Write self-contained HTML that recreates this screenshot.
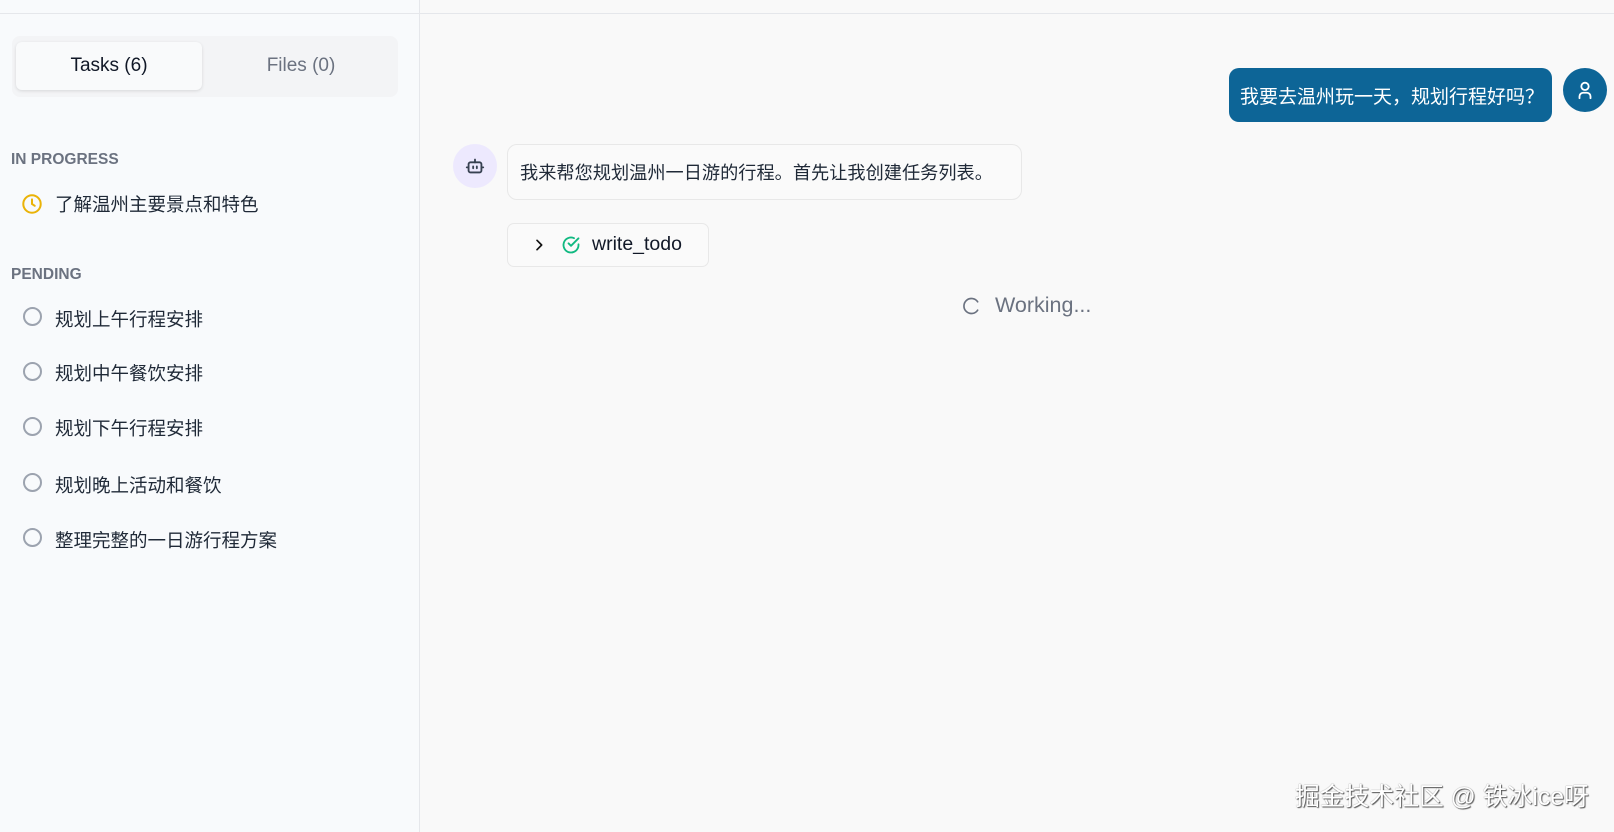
<!DOCTYPE html>
<html><head><meta charset="utf-8"><style>
*{margin:0;padding:0;box-sizing:border-box}
body{width:1614px;height:832px;overflow:hidden;background:#f9f9f9;font-family:"Liberation Sans","Noto Sans CJK SC",sans-serif;position:relative;color:#1f2937}
.abs{position:absolute}
#side{left:0;top:0;width:420px;height:832px;background:#f8fafc;border-right:1px solid #e5e7eb}
#topline{left:0;top:13px;width:1614px;height:1px;background:#e5e7eb}
.tabs{left:12px;top:36px;width:386px;height:61px;background:#f3f4f6;border-radius:8px}
.tab{top:6px;height:48px;display:flex;align-items:center;justify-content:center;font-size:19px}
.h{font-size:15.5px;font-weight:bold;color:#6b7280;left:11px}
.item{left:55px;font-size:18.5px;color:#1f2937;line-height:22px}
.circ{left:23px;width:19px;height:19px;border:2px solid #9ca3af;border-radius:50%}
</style></head><body>
<div class="abs" id="side"></div>
<div class="abs" id="topline"></div>
<div class="abs tabs">
 <div class="abs tab" style="left:4px;width:186px;background:#f9fafb;border-radius:6px;box-shadow:0 1px 3px rgba(0,0,0,.12);color:#111827">Tasks (6)</div>
 <div class="abs tab" style="left:196px;width:186px;color:#6b7280">Files (0)</div>
</div>
<div class="abs h" style="top:151px">IN PROGRESS</div>
<svg class="abs" style="left:21px;top:193px" width="22" height="22" viewBox="0 0 24 24" fill="none" stroke="#eab308" stroke-width="2.2" stroke-linecap="round"><circle cx="12" cy="12" r="9.5"/><path d="M12 7v5l3 2"/></svg>
<div class="abs item" style="top:194px">了解温州主要景点和特色</div>
<div class="abs h" style="top:266px">PENDING</div>
<div class="abs circ" style="top:307px"></div><div class="abs item" style="top:309px">规划上午行程安排</div>
<div class="abs circ" style="top:362px"></div><div class="abs item" style="top:363px">规划中午餐饮安排</div>
<div class="abs circ" style="top:417px"></div><div class="abs item" style="top:418px">规划下午行程安排</div>
<div class="abs circ" style="top:473px"></div><div class="abs item" style="top:475px">规划晚上活动和餐饮</div>
<div class="abs circ" style="top:528px"></div><div class="abs item" style="top:530px">整理完整的一日游行程方案</div>

<div class="abs" style="left:1229px;top:68px;width:323px;height:54px;background:#0d6597;border-radius:10px;color:#fff;font-size:19px;display:flex;align-items:center;padding-left:11px">我要去温州玩一天，规划行程好吗？</div>
<div class="abs" style="left:1563px;top:68px;width:44px;height:44px;border-radius:50%;background:#0d6597"></div>
<svg class="abs" style="left:1574px;top:79px" width="22" height="22" viewBox="0 0 24 24" fill="none" stroke="#fff" stroke-width="2" stroke-linecap="round"><circle cx="12" cy="8" r="4"/><path d="M6 21v-2a4 4 0 0 1 4-4h4a4 4 0 0 1 4 4v2"/></svg>

<div class="abs" style="left:453px;top:144px;width:44px;height:44px;border-radius:50%;background:#ede9fe"></div>
<svg class="abs" style="left:464px;top:155px" width="22" height="22" viewBox="0 0 24 24" fill="none" stroke="#374151" stroke-width="2" stroke-linecap="round"><rect x="5" y="8" width="14" height="11" rx="2"/><path d="M12 8V5M3 13.5h2M19 13.5h2M10 12.5v2M14 12.5v2"/></svg>
<div class="abs" style="left:507px;top:144px;width:515px;height:56px;background:#fafafa;border:1px solid #e8e8e8;border-radius:10px;font-size:18.2px;display:flex;align-items:center;padding-left:12px;color:#1f2937;white-space:nowrap">我来帮您规划温州一日游的行程。首先让我创建任务列表。</div>

<div class="abs" style="left:507px;top:223px;width:202px;height:44px;background:#fafafa;border:1px solid #e8e8e8;border-radius:7px"></div>
<svg class="abs" style="left:531px;top:237px" width="16" height="16" viewBox="0 0 24 24" fill="none" stroke="#111" stroke-width="2.5" stroke-linecap="round" stroke-linejoin="round"><path d="M9 5l7 7-7 7"/></svg>
<svg class="abs" style="left:561px;top:235px" width="20" height="20" viewBox="0 0 24 24" fill="none" stroke="#10b981" stroke-width="2.2" stroke-linecap="round" stroke-linejoin="round"><path d="M21 11.1V12a9 9 0 1 1-5.3-8.2"/><path d="M21 4 12 13l-3-3"/></svg>
<div class="abs" style="left:592px;top:233px;font-size:19.5px;color:#111827">write_todo</div>

<svg class="abs" style="left:961px;top:296px" width="20" height="20" viewBox="0 0 24 24" fill="none" stroke="#6b7280" stroke-width="2" stroke-linecap="round"><path d="M20 7A9 9 0 1 0 20 17"/></svg>
<div class="abs" style="left:995px;top:293px;font-size:21.5px;color:#6b7280">Working...</div>

<div class="abs" style="left:1295px;top:777px;font-size:24.8px;color:#fff;text-shadow:1px 1px 1px #555,0 0 1px #777;white-space:nowrap">掘金技术社区 @ 铁冰ice呀</div>
</body></html>
